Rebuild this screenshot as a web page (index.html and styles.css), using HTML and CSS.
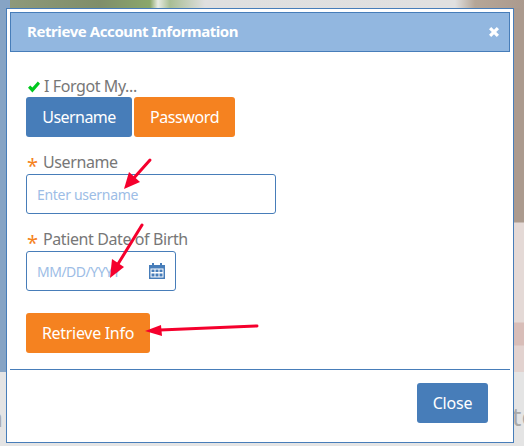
FILE: index.html
```html
<!DOCTYPE html>
<html lang="en">
<head>
    <meta charset="UTF-8">
    <meta name="viewport" content="width=device-width, initial-scale=1.0">
    <title>Retrieve Account Information</title>
    <link rel="stylesheet" href="styles.css">
</head>
<body>
    <!-- Page behind the dialog -->
    <div class="backdrop">
        <div class="photo"></div>
        <div class="left-strip"></div>
        <span class="back-text back-left">n</span>
        <span class="back-text back-right">te</span>
        <span class="back-text back-bottom">your 1000 to t</span>
    </div>

    <div class="modal">
        <div class="modal-header">
            <span class="modal-title">Retrieve Account Information</span>
            <svg class="close-x" viewBox="0 0 10 10" width="10" height="10">
                <path d="M2.200 0 5 2.800 7.800 0 10 2.200 7.200 5 10 7.800 7.800 10 5 7.200 2.200 10 0 7.800 2.800 5 0 2.200z" fill="#fff"/>
            </svg>
        </div>

        <div class="modal-body">
            <div class="field-label forgot-label">
                <svg class="check" viewBox="0 0 12 12" width="12" height="12">
                    <path d="M0 6.800 2.200 4.400 4.400 6.600 9.800 0.600 12 2.800 4.400 11.400z" fill="#00c81e"/>
                </svg>
                I Forgot My...
            </div>
            <div class="button-group">
                <button class="btn btn-blue btn-username">Username</button>
                <button class="btn btn-orange btn-password">Password</button>
            </div>

            <div class="field-label"><span class="req">*</span>Username</div>
            <div class="input-box username-box">Enter username</div>

            <div class="field-label"><span class="req">*</span>Patient Date of Birth</div>
            <div class="input-box date-box">
                MM/DD/YYYY
                <svg class="calendar" viewBox="0 0 16 16" width="16" height="16">
                    <path d="M3 0h2v2h6V0h2v2h3v14H0V2h3z M1.500 5.500v9h13v-9z" fill="#477db9" fill-rule="evenodd"/>
                    <path d="M2.500 6.500h3v2.500h-3z M6.500 6.500h3v2.500h-3z M10.500 6.500h3v2.500h-3z M2.500 10.500h3v3h-3z M6.500 10.500h3v3h-3z M10.500 10.500h3v3h-3z" fill="#477db9"/>
                </svg>
            </div>

            <button class="btn btn-orange btn-retrieve">Retrieve Info</button>
        </div>

        <div class="modal-footer">
            <button class="btn btn-blue btn-close">Close</button>
        </div>
    </div>

    <!-- Red annotation arrows -->
    <svg class="arrows" viewBox="0 0 524 446" width="524" height="446">
        <line x1="150" y1="160" x2="133" y2="179" class="arrow-line"/>
        <polygon points="124,189 129,172 140,182" class="arrow-head"/>
        <line x1="142" y1="225" x2="118" y2="264" class="arrow-line"/>
        <polygon points="110,278 112,259 124,267" class="arrow-head"/>
        <line x1="257" y1="326" x2="160" y2="330" class="arrow-line"/>
        <polygon points="145,331 161,325 162,336" class="arrow-head"/>
    </svg>
</body>
</html>
```

FILE: styles.css
```css
html, body {
    margin: 0;
    padding: 0;
    height: 446px;
    overflow: hidden;
}
body {
    font-family: "Noto Sans", "Open Sans", sans-serif;
    font-size: 16px;
    background-color: #e4e4e4;
    position: relative;
    width: 524px;
}
.backdrop {
    position: absolute;
    inset: 0;
    overflow: hidden;
}
.photo {
    position: absolute;
    left: 0;
    top: 0;
    width: 524px;
    height: 372px;
    background:
        linear-gradient(180deg, #ab9a8e 0, #ab9a8e 222px, #e4d9d6 223px, #e4d9d6 322px, #d8bdb8 323px, #d8bdb8 345px, #e2d2cf 346px),
        #ab9a8e;
}
.photo::before {
    content: "";
    position: absolute;
    left: 0;
    top: 0;
    width: 524px;
    height: 8px;
    background: linear-gradient(90deg, #8f9a7c 0, #7f8e6a 100px, #8aa76a 150px, #e8ece4 158px, #a8be94 170px, #dfdfdf 205px, #e0e0e0 455px, #b5a697 475px, #ab9a8e 524px);
}
.left-strip {
    position: absolute;
    left: 0;
    top: 0;
    width: 10px;
    height: 372px;
    background-color: #86a4c5;
}
.back-text {
    position: absolute;
    color: #a9a9a9;
    font-size: 26px;
    line-height: 30px;
}
.back-left {
    left: -13px;
    top: 402px;
}
.back-right {
    left: 512px;
    top: 401px;
}
.back-bottom {
    left: 340px;
    top: 441px;
}
.modal {
    position: relative;
    box-sizing: border-box;
    width: 508px;
    height: 435px;
    margin-left: 6px;
    top: 8px;
    padding: 3px;
    background-color: #fff;
    border: 1px solid #477db9;
    display: flex;
    flex-direction: column;
}
.modal-header {
    box-sizing: border-box;
    height: 40px;
    flex: none;
    background-color: #92b7e0;
    border: 1px solid #477db9;
    padding: 0 10px 0 16px;
    display: flex;
    align-items: center;
    justify-content: space-between;
}
.modal-title {
    color: #fff;
    font-weight: bold;
    font-size: 15px;
    letter-spacing: -0.42px;
    padding-bottom: 2px;
}
.modal-body {
    flex: none;
    height: 318px;
    box-sizing: border-box;
    padding: 24px 16px 0;
    border-bottom: 1px solid #477db9;
}
.field-label {
    color: #777;
    font-size: 16px;
    letter-spacing: -0.4px;
    line-height: 21px;
    height: 22px;
    display: flex;
    align-items: flex-start;
}
.forgot-label {
    height: 21px;
    align-items: center;
    gap: 4px;
    padding-left: 2px;
}
.req {
    width: 17px;
    color: #f58220;
    font-size: 20px;
    line-height: 21px;
    padding-left: 1px;
    box-sizing: border-box;
    position: relative;
    top: 3px;
}
.button-group {
    display: flex;
    gap: 2px;
    margin-bottom: 15px;
}
.btn {
    box-sizing: border-box;
    height: 40px;
    border: none;
    border-radius: 3px;
    color: #fff;
    font-family: inherit;
    font-size: 16px;
    letter-spacing: -0.4px;
    padding: 0;
}
.btn-blue {
    background-color: #477db9;
}
.btn-orange {
    background-color: #f58220;
}
.btn-username {
    width: 106px;
    letter-spacing: -0.55px;
}
.btn-password {
    width: 101px;
}
.btn-retrieve {
    display: block;
    width: 124px;
    margin-top: 22px;
    letter-spacing: -0.3px;
}
.btn-close {
    width: 71px;
    letter-spacing: -0.2px;
}
.input-box {
    box-sizing: border-box;
    height: 40px;
    border: 1px solid #477db9;
    border-radius: 3px;
    color: #9dbde6;
    font-size: 14px;
    letter-spacing: -0.3px;
    padding: 0 10px;
    display: flex;
    align-items: center;
    justify-content: space-between;
}
.username-box {
    width: 250px;
    margin-bottom: 15px;
}
.date-box {
    width: 150px;
    letter-spacing: -0.5px;
}
.modal-footer {
    flex: 1;
    display: flex;
    justify-content: flex-end;
    padding: 13px 22px 0 0;
}
.arrows {
    position: absolute;
    left: 0;
    top: 0;
    pointer-events: none;
}
.arrow-line {
    stroke: #f5002d;
    stroke-width: 3;
    stroke-linecap: round;
}
.arrow-head {
    fill: #f5002d;
}
```
